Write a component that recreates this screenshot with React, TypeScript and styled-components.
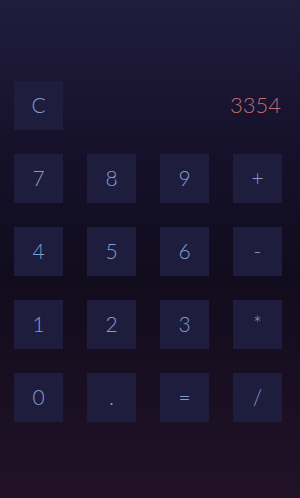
import React, { useState } from 'react';
import styled, { createGlobalStyle } from 'styled-components';

const GlobalStyle = createGlobalStyle`
  html, body {
    margin: 0;
    padding: 0;
    height: 100%;
  }
  body {
    font-family: Lato, "Open Sans", sans-serif;
    background: linear-gradient(180deg, #201d3d 0%, #15112a 30%, #110c1d 55%, #1a0f22 80%, #211227 100%);
  }
  #root {
    min-height: 100%;
  }
`;

const Screen = styled.div`
  min-height: 498px;
  display: flex;
  align-items: center;
  padding: 4px 0 0 14px;
  box-sizing: border-box;
`;

const Pad = styled.div`
  display: grid;
  grid-template-columns: repeat(4, 49px);
  grid-auto-rows: 49px;
  gap: 24px;
`;

const Key = styled.button`
  border: none;
  margin: 0;
  padding: 0 0 2px;
  background: #1f1d3e;
  color: #809fd0;
  font-family: Lato, "Open Sans", sans-serif;
  font-weight: 300;
  font-size: 21px;
  cursor: pointer;
  display: flex;
  align-items: center;
  justify-content: center;
`;

const Display = styled.div`
  grid-column: span 3;
  display: flex;
  align-items: center;
  justify-content: flex-end;
  color: #c46a74;
  font-weight: 300;
  font-size: 22px;
  padding: 0 1px 2px 0;
`;

const keys = ['7', '8', '9', '+', '4', '5', '6', '-', '1', '2', '3', '*', '0', '.', '=', '/'];

export default function App() {
  const [value, setValue] = useState('3354');

  return (
    <>
      <GlobalStyle />
      <Screen>
        <Pad>
          <Key onClick={() => setValue('')}>C</Key>
          <Display>{value}</Display>
          {keys.map((k) => (
            <Key key={k} onClick={() => setValue((v) => v + k)}>
              {k}
            </Key>
          ))}
        </Pad>
      </Screen>
    </>
  );
}
